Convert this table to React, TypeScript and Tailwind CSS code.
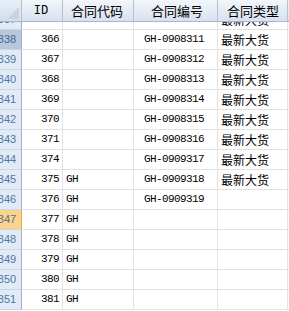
import React from "react";

type Row = { n: number; id: string; code: string; no: string; type: string };

const rows: Row[] = [
  { n: 337, id: "365", code: "", no: "GH-0908310", type: "最新大货" },
  { n: 338, id: "366", code: "", no: "GH-0908311", type: "最新大货" },
  { n: 339, id: "367", code: "", no: "GH-0908312", type: "最新大货" },
  { n: 340, id: "368", code: "", no: "GH-0908313", type: "最新大货" },
  { n: 341, id: "369", code: "", no: "GH-0908314", type: "最新大货" },
  { n: 342, id: "370", code: "", no: "GH-0908315", type: "最新大货" },
  { n: 343, id: "371", code: "", no: "GH-0908316", type: "最新大货" },
  { n: 344, id: "374", code: "", no: "GH-0909317", type: "最新大货" },
  { n: 345, id: "375", code: "GH", no: "GH-0909318", type: "最新大货" },
  { n: 346, id: "376", code: "GH", no: "GH-0909319", type: "" },
  { n: 347, id: "377", code: "GH", no: "", type: "" },
  { n: 348, id: "378", code: "GH", no: "", type: "" },
  { n: 349, id: "379", code: "GH", no: "", type: "" },
  { n: 350, id: "380", code: "GH", no: "", type: "" },
  { n: 351, id: "381", code: "GH", no: "", type: "" },
];

const mono = { fontFamily: '"Liberation Mono", "DejaVu Sans Mono", monospace' };
const cjk = { fontFamily: '"Noto Sans CJK SC", "Noto Sans", sans-serif' };

export default function App() {
  return (
    <div className="w-[289px] h-[311px] overflow-hidden bg-white flex flex-col">
      {/* header */}
      <div className="relative z-10 flex h-[22px] shrink-0 border-b border-[#a7b8ce] bg-gradient-to-b from-[#f3f6fb] to-[#d7e2ef] text-[13px] text-black">
        <div className="ml-[-7px] w-[29px] shrink-0 border-r border-[#b3c3d7] bg-gradient-to-b from-[#e9eff7] to-[#d3deec] relative overflow-hidden">
          <div className="absolute right-[2px] bottom-[2px] w-0 h-0 border-l-[12px] border-l-transparent border-b-[12px] border-b-[#c8d3e0]" />
        </div>
        <div className="w-[41px] shrink-0 border-r border-[#b3c3d7] flex items-center justify-center pr-[2px]" style={mono}>
          <span className="text-[12px]">ID</span>
        </div>
        <div className="w-[71px] shrink-0 border-r border-[#b3c3d7] flex items-center justify-center pr-[2px]" style={cjk}>
          合同代码
        </div>
        <div className="w-[84px] shrink-0 border-r border-[#b3c3d7] flex items-center justify-center pl-[3px]" style={cjk}>
          合同编号
        </div>
        <div className="w-[70px] shrink-0 border-r border-[#b3c3d7] flex items-center justify-center pl-[1px]" style={cjk}>
          合同类型
        </div>
        <div className="flex-1" />
      </div>
      {/* body */}
      <div className="flex-1 overflow-hidden">
        <div className="mt-[-12px]">
          {rows.map((r) => {
            const lab =
              r.n === 338
                ? "bg-[#b8c7d9] text-[#4a6a94]"
                : r.n === 347
                ? "bg-[#fbd38e] text-[#5a6e8c] border-r-[#e9a64a]"
                : "bg-[#e2eaf5] text-[#4f76a8]";
            return (
              <div key={r.n} className="flex h-[20px] text-[12px] text-black">
                <div
                  className={`ml-[-7px] w-[29px] shrink-0 border-r border-b border-r-[#9fb2cb] border-b-[#c9d6e6] flex items-center justify-center text-[11px] ${lab}`}
                  style={{ fontFamily: '"Liberation Sans", Arial, sans-serif' }}
                >
                  {r.n}
                </div>
                <div className="w-[41px] shrink-0 border-r border-b border-[#e3e3e3] flex items-center justify-end pr-[3px] tracking-[-0.6px]" style={mono}>
                  <span className="text-[11px]">{r.id}</span>
                </div>
                <div className="w-[71px] shrink-0 border-r border-b border-[#e3e3e3] flex items-center pl-[3px] tracking-[-0.6px]" style={mono}>
                  <span className="text-[11px]">{r.code}</span>
                </div>
                <div className="w-[84px] shrink-0 border-r border-b border-[#e3e3e3] flex items-center pl-[10px] tracking-[-0.6px]" style={mono}>
                  <span className="text-[11px]">{r.no}</span>
                </div>
                <div className="w-[70px] shrink-0 border-r border-b border-[#e3e3e3] flex items-center pl-[3px]" style={cjk}>
                  {r.type}
                </div>
                <div className="flex-1 border-b border-[#e3e3e3]" />
              </div>
            );
          })}
        </div>
      </div>
    </div>
  );
}
